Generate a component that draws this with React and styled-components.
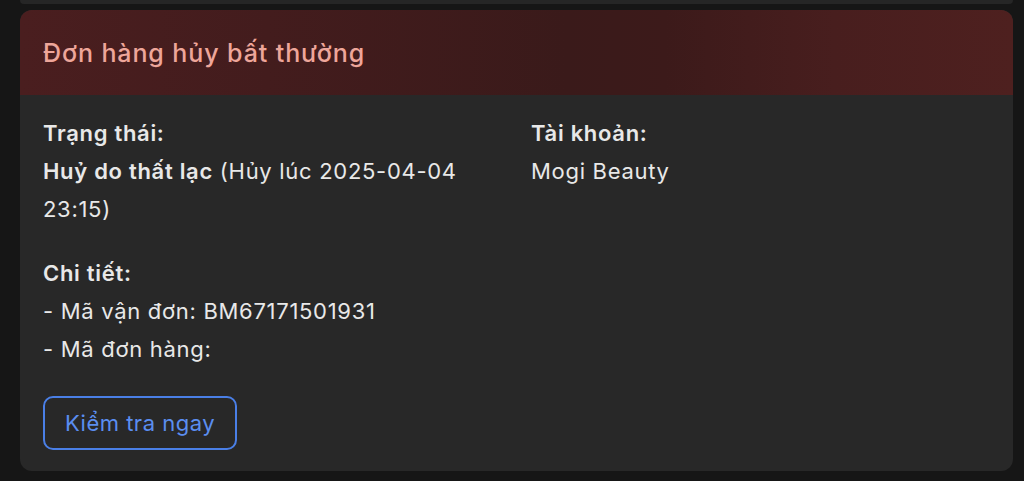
import React from "react";
import styled, { createGlobalStyle } from "styled-components";

const Global = createGlobalStyle`
  html, body { margin: 0; padding: 0; background: #161616; }
  body { font-family: Inter, "Noto Sans", sans-serif; -webkit-font-smoothing: antialiased; }
`;

const Page = styled.div`
  display: flex;
  flex-direction: column;
  gap: 6px;
  padding: 0 11px 0 20px;
  height: 481px;
  box-sizing: border-box;
  overflow: hidden;
`;

const TopCard = styled.div`
  height: 4px;
  background: #262626;
  border-radius: 0 0 10px 10px;
`;

const Card = styled.section`
  background: #282828;
  border-radius: 12px;
  overflow: hidden;
  height: 461px;
  display: flex;
  flex-direction: column;
`;

const Header = styled.header`
  height: 85px;
  display: flex;
  align-items: center;
  padding: 0 23px;
  background: linear-gradient(90deg, #4a1e1f 0%, #431c1d 25%, #3a1a1a 55%, #3c1a1a 65%, #481e1e 82%, #4e201f 100%);
`;

const Title = styled.h2`
  margin: 0;
  font-size: 25px;
  font-weight: 500;
  color: #eea69a;
  letter-spacing: 0.9px;
`;

const Body = styled.div`
  padding: 19px 23px 0 23px;
  display: flex;
  flex-direction: column;
  color: #e8e8e8;
  font-size: 22px;
  letter-spacing: 0.7px;
  line-height: 38px;
`;

const Grid = styled.div`
  display: grid;
  grid-template-columns: 488px 1fr;
`;

const Block = styled.div`
  display: flex;
  flex-direction: column;
`;

const Label = styled.div`
  font-weight: 600;
`;

const Value = styled.div`
  font-weight: 400;
  max-width: 440px;
`;

const Part = styled.span`
  font-weight: ${(p) => (p.$bold ? 600 : 400)};
`;

const Details = styled.div`
  margin-top: 26px;
  display: flex;
  flex-direction: column;
`;

const Button = styled.button`
  margin-top: 28px;
  align-self: flex-start;
  width: 194px;
  height: 54px;
  border: 2px solid #4a7fe6;
  border-radius: 10px;
  background: transparent;
  color: #5b8ef0;
  font-family: inherit;
  font-size: 22px;
  letter-spacing: 0.5px;
  cursor: pointer;
`;

export default function App() {
  return (
    <>
      <Global />
      <Page>
        <TopCard />
        <Card>
          <Header>
            <Title>Đơn hàng hủy bất thường</Title>
          </Header>
          <Body>
            <Grid>
              <Block>
                <Label>Trạng thái:</Label>
                <Value>
                  <Part $bold>Huỷ do thất lạc</Part> <Part>(Hủy lúc 2025-04-04 23:15)</Part>
                </Value>
              </Block>
              <Block>
                <Label>Tài khoản:</Label>
                <Value>Mogi Beauty</Value>
              </Block>
            </Grid>
            <Details>
              <Label>Chi tiết:</Label>
              <Value>- Mã vận đơn: BM67171501931</Value>
              <Value>- Mã đơn hàng:</Value>
            </Details>
            <Button>Kiểm tra ngay</Button>
          </Body>
        </Card>
      </Page>
    </>
  );
}
